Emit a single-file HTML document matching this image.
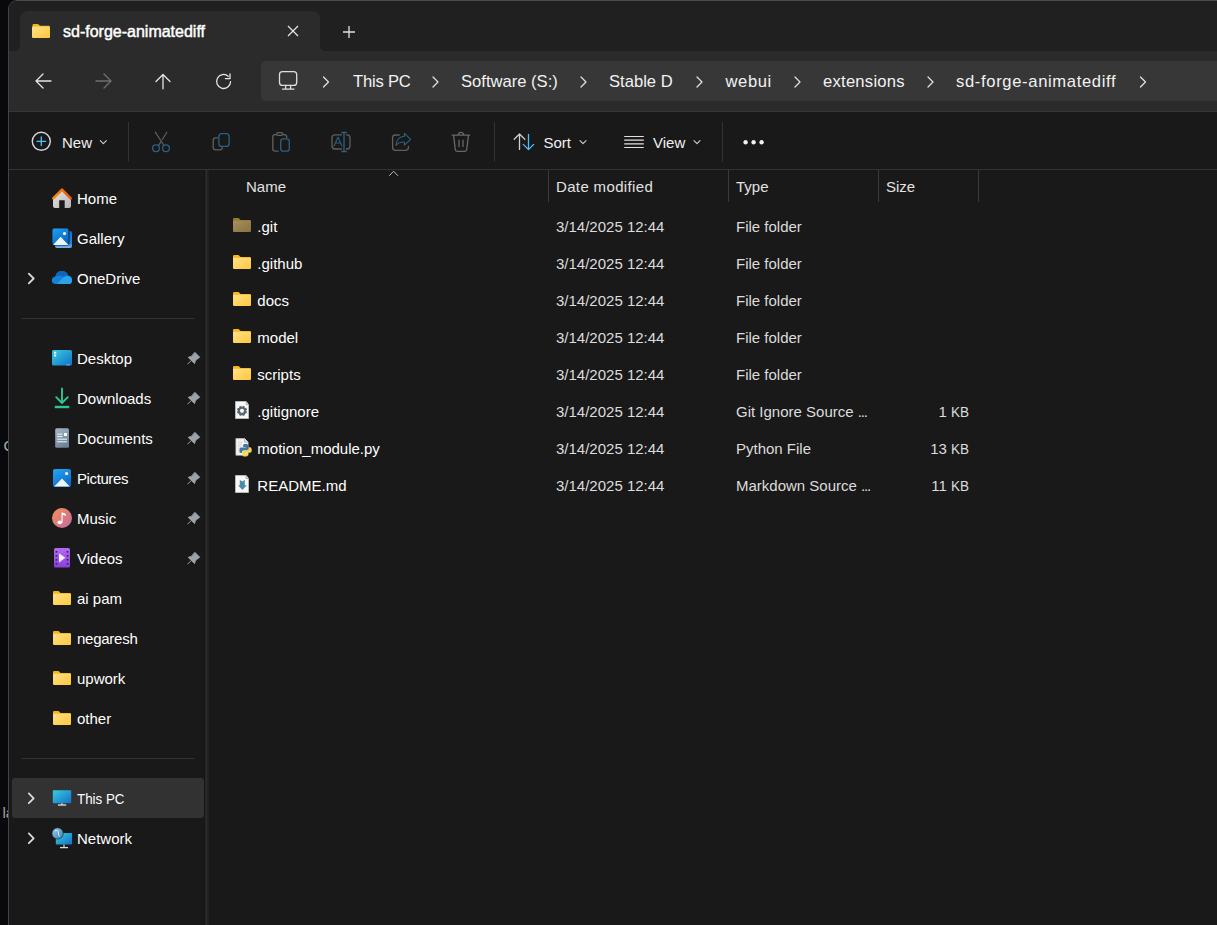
<!DOCTYPE html>
<html><head><meta charset="utf-8">
<style>
*{box-sizing:border-box;margin:0;padding:0}
html,body{width:1217px;height:925px;overflow:hidden;background:#09080b;font-family:"Liberation Sans",sans-serif;color:#fff}
.a{position:absolute}
svg{position:absolute;overflow:visible}
#win{position:absolute;left:8px;top:0;width:1230px;height:940px;background:#191919;border:1px solid #434343;border-top-color:#4a4a4a;border-radius:9px 9px 0 0;overflow:hidden}
.t{position:absolute;white-space:nowrap;font-size:15px;line-height:15px}
.h{color:#e2e2e2}.d{color:#dcdcdc}
.s17{font-size:16.6px;line-height:17px}
</style></head><body>
<!-- desktop bits peeking -->
<div class="t" style="left:3.4px;top:438.2px;color:#9fb0bc">C</div>
<div class="t" style="left:2.4px;top:805.4px;color:#a0a0a0">la</div>
<div id="win">
  <!-- tab bar -->
  <div class="a" style="left:0;top:0;width:1230px;height:50px;background:#202020"></div>
  <div class="a" style="left:0;top:42px;width:1230px;height:9px;background:#2b2b2b"></div>
  <div class="a" style="left:0;top:0;width:11px;height:50px;background:#202020;border-radius:0 0 5px 0"></div>
  <div class="a" style="left:311px;top:0;width:919px;height:50px;background:#202020;border-radius:0 0 0 5px"></div>
  <div class="a" style="left:11px;top:10px;width:300px;height:41px;background:#2b2b2b;border-radius:8px 8px 0 0"></div>
  <!-- nav -->
  <div class="a" style="left:0;top:50px;width:1230px;height:60px;background:#2b2b2b"></div>
  <div class="a" style="left:0;top:110px;width:1230px;height:1px;background:#363636"></div>
  <div class="a" style="left:252px;top:60px;width:1000px;height:40px;background:#373737;border-radius:5px"></div>
  <!-- command bar bottom line -->
  <div class="a" style="left:0;top:168px;width:1230px;height:1px;background:#333"></div>
  <!-- splitter -->
  <div class="a" style="left:195px;top:169px;width:5px;height:800px;background:linear-gradient(90deg,#151515 0,#151515 1px,#252525 1px,#252525 2px,#2c2c2c 2px,#2c2c2c 3px,#222 3px,#222 4px,#1f1f1f 4px)"></div>
</div>

<!-- ===== TAB CONTENT ===== -->
<svg style="left:32px;top:24px" width="18" height="14" viewBox="0 0 18 14">
  <defs><linearGradient id="fg1" x1="0" y1="0" x2="1" y2="1"><stop offset="0" stop-color="#ffe28a"/><stop offset="1" stop-color="#fcc43a"/></linearGradient></defs>
  <path d="M0.5 1.2 Q0.5 0 1.7 0 H6 L8 1.8 H16.8 Q17.8 1.8 17.8 2.8 V3 H0.5Z" fill="#f2b416"/>
  <rect x="0" y="2.6" width="18" height="11.4" rx="1" fill="url(#fg1)"/>
</svg>
<div class="t" style="left:63px;top:23.6px;font-size:16px;line-height:16px;-webkit-text-stroke:0.45px #fff;color:#fff">sd-forge-animatediff</div>
<svg style="left:287px;top:25px" width="12" height="12" viewBox="0 0 12 12"><path d="M1 1 L11 11 M11 1 L1 11" stroke="#e8e8e8" stroke-width="1.2"/></svg>
<svg style="left:342px;top:25px" width="14" height="14" viewBox="0 0 14 14"><path d="M7 1 V13 M1 7 H13" stroke="#e0e0e0" stroke-width="1.3"/></svg>

<!-- ===== NAV ===== -->
<svg style="left:0;top:0" width="1217" height="120" viewBox="0 0 1217 120">
  <g fill="none" stroke-width="1.3" stroke-linecap="round" stroke-linejoin="round">
    <path d="M36 81 H51 M43 74 L36 81 L43 88" stroke="#e6e6e6"/>
    <path d="M96 81 H111 M104 74 L111 81 L104 88" stroke="#707070"/>
    <path d="M163 74.5 V88.8 M156 81.5 L163 74.5 L170 81.5" stroke="#e6e6e6"/>
    <path d="M230.6 81.6 A7 7 0 1 1 228.2 76.2" stroke="#e6e6e6"/>
    <path d="M230 74 V78.6 H225.4" stroke="#e6e6e6"/>
    <!-- monitor -->
    <rect x="279.5" y="71.6" width="17.2" height="13.8" rx="3" stroke="#dedede"/>
    <path d="M285.6 85.5 V89 M290.6 85.5 V89 M282.5 89.1 H294" stroke="#dedede"/>
    <!-- chevrons -->
    <g stroke="#e0e0e0" stroke-width="1.25">
      <path d="M323.5 77 L328.5 82 L323.5 87"/>
      <path d="M433 77 L438 82 L433 87"/>
      <path d="M581 77 L586 82 L581 87"/>
      <path d="M697 77 L702 82 L697 87"/>
      <path d="M795 77 L800 82 L795 87"/>
      <path d="M928 77 L933 82 L928 87"/>
      <path d="M1140.5 77 L1145.5 82 L1140.5 87"/>
    </g>
  </g>
</svg>
<div class="t s17" style="letter-spacing:-0.2px;left:353px;top:72.6px;color:#f2f2f2">This PC</div>
<div class="t s17" style="left:461px;top:72.6px;color:#f2f2f2">Software (S:)</div>
<div class="t s17" style="left:609px;top:72.6px;color:#f2f2f2">Stable D</div>
<div class="t s17" style="left:725.5px;top:72.6px;color:#f2f2f2;letter-spacing:0.6px">webui</div>
<div class="t s17" style="left:823px;top:72.6px;color:#f2f2f2;letter-spacing:0.25px">extensions</div>
<div class="t s17" style="left:956px;top:72.6px;color:#f2f2f2;letter-spacing:0.65px">sd-forge-animatediff</div>

<!-- ===== COMMAND BAR ===== -->
<svg style="left:0;top:0" width="1217" height="170" viewBox="0 0 1217 170">
  <g fill="none" stroke-width="1.3" stroke-linecap="round" stroke-linejoin="round">
    <!-- New -->
    <circle cx="41.3" cy="141.3" r="9" stroke="#d8d8d8" stroke-width="1.4"/>
    <path d="M41.3 137 V145.6 M37 141.3 H45.6" stroke="#4cc2ff" stroke-width="1.3"/>
    <path d="M100.3 140.6 L103.3 143.6 L106.3 140.6" stroke="#cfcfcf" stroke-width="1.1"/>
    <!-- separators -->
    <path d="M128.5 122 V161.5 M494.5 122 V161.5 M722.5 122 V161.5" stroke="#333" stroke-width="1" stroke-linecap="butt"/>
    <!-- scissors -->
    <path d="M155.3 132.2 L163.7 145 M166.8 132.2 L162.4 139.5 M161 141.8 L158.5 145.3" stroke="#5f5f5f" stroke-width="1.2"/>
    <circle cx="156" cy="148.2" r="3.4" stroke="#2b6180" stroke-width="1.3"/>
    <circle cx="166" cy="148.2" r="3.4" stroke="#2b6180" stroke-width="1.3"/>
    <!-- copy -->
    <path d="M217.6 137.8 H215.6 Q213.2 137.8 213.2 140.2 V147.4 Q213.2 149.8 215.6 149.8 H219.9 Q222.3 149.8 222.3 147.6" stroke="#5f5f5f"/>
    <rect x="218.9" y="133.7" width="10.2" height="12.7" rx="3" stroke="#2b6180"/>
    <!-- paste -->
    <path d="M278 151.2 H275.2 Q272.8 151.2 272.8 148.8 V137 Q272.8 134.6 275.2 134.6 H276.4 M282.8 134.6 H284.3 Q286.7 134.6 286.7 137 V137.5" stroke="#5f5f5f"/>
    <rect x="276.6" y="132.6" width="6.2" height="2.8" rx="1.4" stroke="#5f5f5f"/>
    <rect x="280.7" y="138.9" width="8.6" height="12.3" rx="2.5" stroke="#2b6180"/>
    <!-- rename -->
    <path d="M341.5 134.8 H335 Q332 134.8 332 137.8 V146 Q332 149 335 149 H341.5 M346.5 134.8 H347 Q350 134.8 350 137.8 V146 Q350 149 347 149 H346.5" stroke="#5f5f5f"/>
    <path d="M344 132.5 V151.5 M341.3 132.5 H346.8 M341.3 151.5 H346.8" stroke="#2b6180" stroke-linecap="butt"/>
    <path d="M334 146 L338 137.3 L342 146 M335.5 143 H340.5" stroke="#2b6180" stroke-width="1.1"/>
    <!-- share -->
    <path d="M399.2 135 H395.4 Q392.6 135 392.6 137.8 V147.6 Q392.6 150.4 395.4 150.4 H405.6 Q408.4 150.4 408.4 147.6 V146.3" stroke="#5f5f5f"/>
    <path d="M404.4 133.4 L410.6 139.3 L404.4 145.2 V142 Q399 141.6 396 145.3 Q396.8 136.8 404.4 136.3 Z" stroke="#2b6180" stroke-width="1.15"/>
    <!-- trash -->
    <path d="M452.2 135.1 H469.6 M458.2 135 Q458.8 132.4 461 132.4 Q463.2 132.4 463.8 135 M453.6 135.5 L455.3 149.6 Q455.6 151.4 457.6 151.4 H464.4 Q466.4 151.4 466.7 149.6 L468.4 135.5 M459 140.2 V146.5 M463 140.2 V146.5" stroke="#686868"/>
    <!-- sort -->
    <path d="M519.5 134.2 V149.4 M514.2 139.2 L519.5 134 L524.8 139.2" stroke="#d0d0d0"/>
    <path d="M528.5 134.4 V149.4 M523.3 144.4 L528.5 149.6 L533.7 144.4" stroke="#4cc2ff"/>
    <path d="M580 140.6 L583 143.6 L586 140.6" stroke="#cfcfcf" stroke-width="1.1"/>
    <!-- view -->
    <path d="M624.2 136.5 H643.8 M624.2 147.5 H643.8" stroke="#e2e2e2" stroke-width="1.1" stroke-linecap="butt"/><path d="M624.2 140.2 H643.8 M624.2 143.8 H643.8" stroke="#e2e2e2" stroke-width="1.2" stroke-linecap="butt"/>
    <path d="M694 140.6 L697 143.6 L700 140.6" stroke="#cfcfcf" stroke-width="1.1"/>
  </g>
  <g fill="#f0f0f0"><circle cx="745.6" cy="142.3" r="2.2"/><circle cx="753.6" cy="142.3" r="2.2"/><circle cx="761.6" cy="142.3" r="2.2"/></g>
</svg>
<div class="t" style="left:62px;top:135.4px;color:#f0f0f0">New</div>
<div class="t" style="left:543.5px;top:135.4px;color:#f0f0f0">Sort</div>
<div class="t" style="left:653px;top:135.4px;color:#f0f0f0">View</div>

<!-- ===== SIDEBAR ===== -->
<svg style="left:0;top:0" width="210" height="925" viewBox="0 0 210 925">
  <defs>
    <linearGradient id="roof" x1="0" y1="0" x2="1" y2="0"><stop offset="0" stop-color="#f98a0a"/><stop offset="1" stop-color="#e8590c"/></linearGradient>
    <linearGradient id="house" x1="0" y1="0" x2="1" y2="1"><stop offset="0" stop-color="#e4e4e4"/><stop offset="1" stop-color="#b5b5b5"/></linearGradient>
    <linearGradient id="gal" x1="0" y1="0" x2="0.6" y2="1"><stop offset="0" stop-color="#1fa2ee"/><stop offset="1" stop-color="#0866c6"/></linearGradient>
    <linearGradient id="desk" x1="0" y1="0" x2="1" y2="1"><stop offset="0" stop-color="#37cde0"/><stop offset="1" stop-color="#1470c8"/></linearGradient>
    <linearGradient id="doc" x1="0" y1="0" x2="0.5" y2="1"><stop offset="0" stop-color="#a9b8c8"/><stop offset="1" stop-color="#6c8299"/></linearGradient>
    <linearGradient id="pic" x1="0" y1="0" x2="0.6" y2="1"><stop offset="0" stop-color="#27a6ef"/><stop offset="1" stop-color="#0a6ccf"/></linearGradient>
    <linearGradient id="mus" x1="0" y1="0" x2="1" y2="1"><stop offset="0" stop-color="#f79150"/><stop offset="1" stop-color="#c468a8"/></linearGradient>
    <linearGradient id="vid" x1="0" y1="0" x2="0" y2="1"><stop offset="0" stop-color="#b26cf2"/><stop offset="1" stop-color="#8a3fdc"/></linearGradient>
    <linearGradient id="fgs" x1="0" y1="0" x2="1" y2="1"><stop offset="0" stop-color="#ffe08a"/><stop offset="1" stop-color="#ffc83a"/></linearGradient>
    <linearGradient id="globe" x1="0" y1="0" x2="1" y2="1"><stop offset="0" stop-color="#9fd0ee"/><stop offset="1" stop-color="#2f7fb8"/></linearGradient>
    <g id="sfold">
      <path d="M0 1.2 Q0 0 1.2 0 H5.6 L7.6 2 H16.8 Q18 2 18 3.2 V4 H0Z" fill="#f4b71c"/>
      <rect x="0" y="2.8" width="18" height="11.2" rx="1" fill="url(#fgs)"/>
    </g>
    <path id="pin" d="M7.8 0.6 L12.4 5.2 L9 7.8 Q8.2 8.6 7.9 9.6 L7.2 11.6 L1 5.4 L3.2 4.6 Q4.3 4.2 5 3.4 Z M3.6 8.8 L0.5 11.9" />
    <path id="chev" d="M0 0 L4.9 4.9 L0 9.8" fill="none" stroke="#dadada" stroke-width="1.8" stroke-linecap="round" stroke-linejoin="round"/>
  </defs>
  <!-- dividers -->
  <rect x="22" y="318" width="172" height="1" fill="#333"/>
  <rect x="22" y="758" width="172" height="1" fill="#333"/>
  <!-- This PC highlight -->
  <rect x="12" y="778" width="192" height="40" rx="3" fill="#323232"/>
  <!-- chevrons -->
  <use href="#chev" x="28.8" y="273.6"/>
  <use href="#chev" x="28.8" y="793.4"/>
  <use href="#chev" x="28.8" y="833.4"/>
  <!-- Home -->
  <path d="M53 199 V206 Q53 208 55 208 H59.2 V200.3 H64.7 V208 H69 Q71 208 71 206 V199 L62 190.5Z" fill="url(#house)"/>
  <path d="M53.3 198.3 L62 189.6 L70.7 198.3" fill="none" stroke="url(#roof)" stroke-width="2.6" stroke-linecap="round" stroke-linejoin="round"/>
  <!-- Gallery -->
  <linearGradient id="galb" x1="0" y1="0" x2="0" y2="1"><stop offset="0" stop-color="#0e6fd2"/><stop offset="0.75" stop-color="#2a86dc"/><stop offset="1" stop-color="#7fb6ec"/></linearGradient><rect x="55" y="231" width="17" height="17" rx="2" fill="url(#galb)"/>
  <rect x="52" y="228" width="17" height="17" rx="2" fill="url(#gal)" stroke="#111" stroke-width="0.8"/>
  <path d="M53 245 L60.6 236.8 L68.5 245Z" fill="#eaf4fd"/>
  <circle cx="64.5" cy="233.5" r="1.6" fill="#fff"/>
  <!-- OneDrive -->
  <path d="M55.5 284 Q51.8 284 51.8 280.6 Q51.8 277 55.4 276.5 Q56.4 271 62 271 Q66.6 271 68.2 275.6 Q72 276.2 72 280.2 Q72 284 68.4 284Z" fill="#1580d8"/>
  <path d="M57 283.9 L63.6 277.2 Q66 275.8 68.6 276.2 Q72 277 72 280.4 Q72 284 68.4 284Z" fill="#2ba3ea"/>
  <path d="M55.4 276.5 Q56.4 271 62 271 Q66.6 271 68.2 275.6 Q65.5 275.3 63.4 276.8 Q60 274.6 55.4 276.5Z" fill="#0f64bb"/>
  <!-- Desktop -->
  <rect x="52" y="350" width="20" height="15.6" rx="1.6" fill="url(#desk)"/>
  <rect x="54" y="351.8" width="2.2" height="1.8" fill="#fff"/>
  <rect x="54" y="354.6" width="2.2" height="1.8" fill="#fff"/>
  <rect x="66.6" y="364.4" width="1" height="1" fill="#dff"/><rect x="68.6" y="364.4" width="1" height="1" fill="#dff"/>
  <!-- Downloads -->
  <path d="M62 388.4 V403 M56.2 397.2 L62 403 L67.8 397.2" fill="none" stroke="#2ec595" stroke-width="1.9" stroke-linecap="round" stroke-linejoin="round"/>
  <rect x="54.8" y="405.8" width="14.4" height="2.4" fill="#2ec595"/>
  <!-- Documents -->
  <rect x="55.2" y="428.2" width="13.8" height="19.6" rx="1.6" fill="url(#doc)"/>
  <path d="M57.2 434.2 H62.5 M57.2 436.6 H62.5 M57.2 439.2 H67 M57.2 441.8 H67" stroke="#f2f6fa" stroke-width="1"/>
  <rect x="64" y="433" width="3" height="3" fill="#f2f6fa"/>
  <!-- Pictures -->
  <rect x="53" y="469" width="18" height="18" rx="2" fill="url(#pic)"/>
  <path d="M54.2 486.4 L62 478.6 L69.8 486.4Z" fill="#eef6fd"/>
  <circle cx="66.6" cy="473.5" r="1.6" fill="#fff"/>
  <!-- Music -->
  <circle cx="62" cy="518" r="10" fill="url(#mus)"/>
  <path d="M61.5 522.2 V512.6 Q64.6 512.4 66 514.6 V516 Q64.2 514.8 62.6 515 V522.2" fill="#fff"/>
  <ellipse cx="59.8" cy="522.3" rx="2.3" ry="1.9" fill="#fff"/>
  <!-- Videos -->
  <rect x="54" y="548" width="16" height="19.6" rx="1.6" fill="url(#vid)"/>
  <g fill="#3b2059"><rect x="55.6" y="551" width="1.7" height="1.6"/><rect x="55.6" y="555" width="1.7" height="1.6"/><rect x="55.6" y="559" width="1.7" height="1.6"/><rect x="55.6" y="563" width="1.7" height="1.6"/>
  <rect x="66.7" y="551" width="1.7" height="1.6"/><rect x="66.7" y="555" width="1.7" height="1.6"/><rect x="66.7" y="559" width="1.7" height="1.6"/><rect x="66.7" y="563" width="1.7" height="1.6"/></g>
  <path d="M59 553.2 L65.4 557.8 L59 562.4Z" fill="#f4eefc"/>
  <!-- folders -->
  <use href="#sfold" x="53" y="591"/>
  <use href="#sfold" x="53" y="631"/>
  <use href="#sfold" x="53" y="671"/>
  <use href="#sfold" x="53" y="711"/>
  <!-- pins -->
  <g fill="#9aa3ab" stroke="#9aa3ab" stroke-width="1" stroke-linecap="round" stroke-linejoin="round">
    <use href="#pin" x="187.3" y="352"/>
    <use href="#pin" x="187.3" y="392"/>
    <use href="#pin" x="187.3" y="432"/>
    <use href="#pin" x="187.3" y="472"/>
    <use href="#pin" x="187.3" y="512"/>
    <use href="#pin" x="187.3" y="552"/>
  </g>
  <!-- This PC -->
  <rect x="52.8" y="790.2" width="18.4" height="13" rx="0.8" fill="url(#desk)"/>
  <path d="M58 805 H66.2" stroke="#d8d8d8" stroke-width="1.4"/>
  <path d="M62 803 V805" stroke="#d8d8d8" stroke-width="1.2"/>
  <!-- Network -->
  <rect x="55.8" y="833" width="16.3" height="11.6" rx="0.8" fill="url(#desk)"/>
  <path d="M60 847.6 H68" stroke="#d8d8d8" stroke-width="1.3"/>
  <path d="M64 844.6 V847.6" stroke="#d8d8d8" stroke-width="1.2"/>
  <circle cx="57.6" cy="833.4" r="5.6" fill="url(#globe)" stroke="#1b1b1b" stroke-width="0.6"/>
  <path d="M55 831 Q57 829.5 58.5 831.5 Q57.5 834 59.5 836.5" fill="none" stroke="#d9eefb" stroke-width="1"/>
</svg>
<div class="t" style="left:77px;top:191.3px">Home</div>
<div class="t" style="left:77px;top:231.3px">Gallery</div>
<div class="t" style="left:77px;top:271.3px">OneDrive</div>
<div class="t" style="left:77px;top:351.3px">Desktop</div>
<div class="t" style="left:77px;top:391.3px">Downloads</div>
<div class="t" style="left:77px;top:431.3px">Documents</div>
<div class="t" style="left:77px;top:471.3px;letter-spacing:-0.4px">Pictures</div>
<div class="t" style="left:77px;top:511.3px">Music</div>
<div class="t" style="left:77px;top:551.3px">Videos</div>
<div class="t" style="left:77px;top:591.3px">ai pam</div>
<div class="t" style="left:77px;top:631.3px;letter-spacing:-0.25px">negaresh</div>
<div class="t" style="left:77px;top:671.3px">upwork</div>
<div class="t" style="left:77px;top:711.3px">other</div>
<div class="t" style="left:77px;top:791.3px;transform:scaleX(0.89);transform-origin:0 50%">This PC</div>
<div class="t" style="left:77px;top:831.3px">Network</div>

<!-- ===== FILE LIST ===== -->
<svg style="left:0;top:0" width="1217" height="925" viewBox="0 0 1217 925">
  <defs>
    <linearGradient id="fgf" x1="0" y1="0" x2="1" y2="1"><stop offset="0" stop-color="#ffe08a"/><stop offset="1" stop-color="#ffc83a"/></linearGradient>
    <linearGradient id="fgd" x1="0" y1="0" x2="1" y2="1"><stop offset="0" stop-color="#a39068"/><stop offset="1" stop-color="#8a7136"/></linearGradient>
    <g id="ffold">
      <path d="M0 1.2 Q0 0 1.2 0 H5.6 L7.6 2 H16.8 Q18 2 18 3.2 V4 H0Z" fill="#f4b71c"/>
      <rect x="0" y="2.8" width="18" height="11.2" rx="1" fill="url(#fgf)"/>
    </g>
    <g id="dimfold">
      <path d="M0 1.2 Q0 0 1.2 0 H5.6 L7.6 2 H16.8 Q18 2 18 3.2 V4 H0Z" fill="#9a7b22"/>
      <rect x="0" y="2.8" width="18" height="11.2" rx="1" fill="url(#fgd)"/>
    </g>

    <g id="gear">
      <use href="#page"/>
      <g transform="translate(7 9.8)" fill="#56656f">
        <circle r="3.9"/>
        <g transform="rotate(22.5)"><rect x="-1.2" y="-5" width="2.4" height="10"/><rect x="-1.2" y="-5" width="2.4" height="10" transform="rotate(45)"/><rect x="-1.2" y="-5" width="2.4" height="10" transform="rotate(90)"/><rect x="-1.2" y="-5" width="2.4" height="10" transform="rotate(135)"/></g>
        <circle r="2.1" fill="#f8f8f8"/>
      </g>
    </g>
    <g id="py">
      <path d="M0.9 0.6 H9.6 L13.1 4.1 V17.2 H0.9Z" fill="#f2f2f2" stroke="#c4c4c4" stroke-width="0.7"/>
      <path d="M9.6 0.6 V4.1 H13.1" fill="#e0e0e0" stroke="#a8a8a8" stroke-width="0.7"/>
      <path d="M3 4.2 H7 M3 6.3 H7 M3 8.4 H6 M3 10.3 H5 M3 12.2 H5 M3 14.2 H5" stroke="#cfcfcf" stroke-width="0.8"/>
      <path d="M9.5 5.9 H11.6 Q13.1 5.9 13.1 7.4 V11 Q13.1 12.4 11.7 12.4 H8.6 Q7 12.4 7 14 V14.9 H5.8 Q4.4 14.9 4.4 12.4 Q4.4 9.6 5.8 9.6 H10.6 V9 H8.1 V7.4 Q8.1 5.9 9.5 5.9Z" fill="#3f77a8"/>
      <path d="M11.1 18.5 H9 Q7.5 18.5 7.5 17 V13.6 Q7.5 12.4 8.9 12.4 H11.8 Q13.6 12.4 13.6 10.8 V9.2 H15.2 Q16.7 9.2 16.7 11.8 Q16.7 14.8 15.2 14.8 H10.2 V15.4 H12.6 V17 Q12.6 18.5 11.1 18.5Z" fill="#f8d54a"/>
    </g>
    <g id="md">
      <use href="#page"/>
      <path d="M4.8 5 L7.3 6.5 L9.8 5 V10.3 H11.8 L7.4 14.9 L3.1 10.3 H4.8Z" fill="#4a8caa"/>
    </g>
    <g id="page">
      <path d="M0.5 0.5 H11.1 L13.5 3.6 V17.5 H0.5Z" fill="#f8f8f8" stroke="#bcbcbc" stroke-width="0.9"/>
      <path d="M11.1 0.5 V3.6 H13.5" fill="#e6e6e6" stroke="#9c9c9c" stroke-width="0.8"/>
    </g>
  </defs>
  <!-- header -->
  <path d="M389.2 175.8 L393.6 171.2 L398 175.8" fill="none" stroke="#bdbdbd" stroke-width="1"/>
  <g fill="#3a3a3a"><rect x="548" y="170" width="1" height="32"/><rect x="728" y="170" width="1" height="32"/><rect x="878" y="170" width="1" height="32"/><rect x="978" y="170" width="1" height="32"/></g>
<use href="#dimfold" x="233" y="218"/>
  <use href="#ffold" x="233" y="255"/>
  <use href="#ffold" x="233" y="292"/>
  <use href="#ffold" x="233" y="329"/>
  <use href="#ffold" x="233" y="366"/>
  <use href="#gear" x="235" y="401"/>
  <use href="#py" x="235" y="438"/>
  <use href="#md" x="235" y="475"/>
</svg>
<div class="t h" style="left:246px;top:179px">Name</div>
<div class="t h" style="left:556px;top:179px;letter-spacing:0.35px">Date modified</div>
<div class="t h" style="left:736px;top:179px">Type</div>
<div class="t h" style="left:886px;top:179px">Size</div>
<div class="t" style="left:257.3px;top:219.0px">.git</div>
<div class="t d" style="left:556px;top:219.0px">3/14/2025 12:44</div>
<div class="t d" style="left:736px;top:219.0px">File folder</div>
<div class="t" style="left:257.3px;top:256.0px">.github</div>
<div class="t d" style="left:556px;top:256.0px">3/14/2025 12:44</div>
<div class="t d" style="left:736px;top:256.0px">File folder</div>
<div class="t" style="left:257.3px;top:293.0px">docs</div>
<div class="t d" style="left:556px;top:293.0px">3/14/2025 12:44</div>
<div class="t d" style="left:736px;top:293.0px">File folder</div>
<div class="t" style="left:257.3px;top:330.0px">model</div>
<div class="t d" style="left:556px;top:330.0px">3/14/2025 12:44</div>
<div class="t d" style="left:736px;top:330.0px">File folder</div>
<div class="t" style="left:257.3px;top:367.0px">scripts</div>
<div class="t d" style="left:556px;top:367.0px">3/14/2025 12:44</div>
<div class="t d" style="left:736px;top:367.0px">File folder</div>
<div class="t" style="left:257.3px;top:404.0px">.gitignore</div>
<div class="t d" style="left:556px;top:404.0px">3/14/2025 12:44</div>
<div class="t d" style="left:736px;top:404.0px">Git Ignore Source <span style="letter-spacing:-1.2px">...</span></div>
<div class="t d" style="right:270.2px;top:404.0px">1</div><div class="t d" style="right:247.6px;top:404.0px;transform:scaleX(0.9);transform-origin:100% 50%">KB</div>
<div class="t" style="left:257.3px;top:441.0px">motion_module.py</div>
<div class="t d" style="left:556px;top:441.0px">3/14/2025 12:44</div>
<div class="t d" style="left:736px;top:441.0px">Python File</div>
<div class="t d" style="right:270.2px;top:441.0px">13</div><div class="t d" style="right:247.6px;top:441.0px;transform:scaleX(0.9);transform-origin:100% 50%">KB</div>
<div class="t" style="left:257.3px;top:478.0px">README.md</div>
<div class="t d" style="left:556px;top:478.0px">3/14/2025 12:44</div>
<div class="t d" style="left:736px;top:478.0px">Markdown Source <span style="letter-spacing:-1.2px">...</span></div>
<div class="t d" style="right:270.2px;top:478.0px">11</div><div class="t d" style="right:247.6px;top:478.0px;transform:scaleX(0.9);transform-origin:100% 50%">KB</div>
</body></html>
